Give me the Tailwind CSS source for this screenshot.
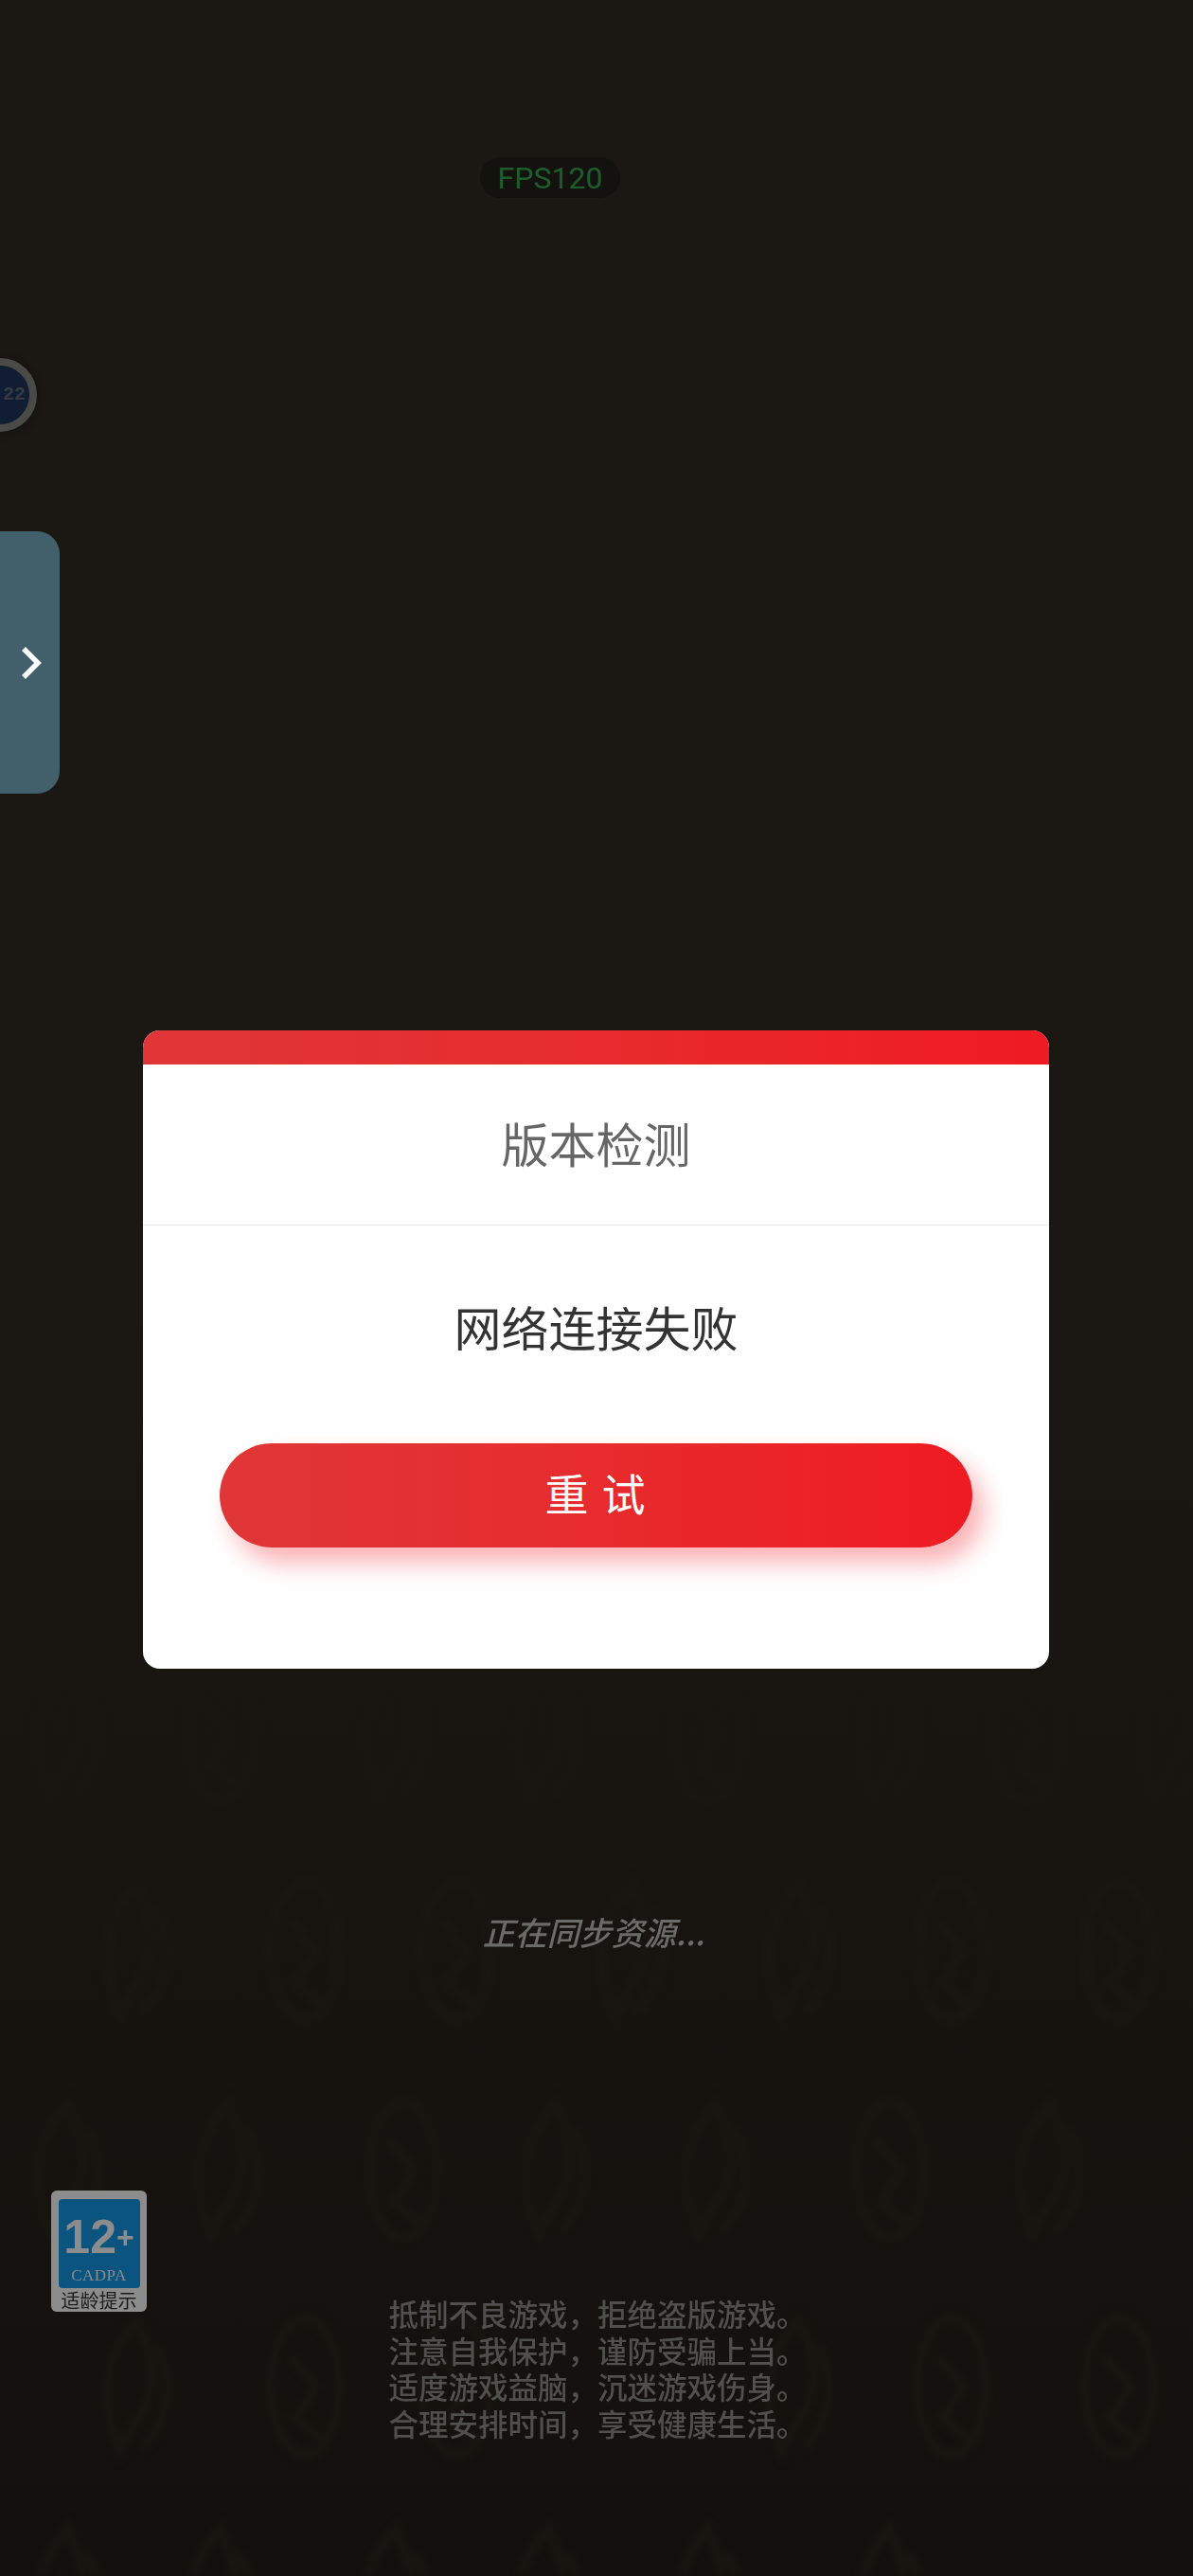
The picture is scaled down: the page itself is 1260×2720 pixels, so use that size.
<!DOCTYPE html>
<html lang="zh-CN">
<head>
    <meta charset="UTF-8">
    <meta name="viewport" content="width=device-width, initial-scale=1.0">
    <title>版本检测</title>
    <script src="https://cdn.jsdelivr.net/npm/@tailwindcss/browser@4"></script>
</head>
<body class="bg-black">
    <div class="relative w-[1260px] h-[2720px] overflow-hidden bg-gradient-to-b from-[#1b1814] via-[#1b1713] to-[#13110d] font-['Noto_Sans_CJK_SC','Noto_Sans',sans-serif]">

        <!-- faint background watermark -->
        <svg class="absolute inset-0 blur-[3px] opacity-70" width="1260" height="2720" viewBox="0 0 1260 2720" fill="none" stroke="#1a1712" stroke-width="11" stroke-linecap="round">
            <defs>
                <g id="flame">
                    <path d="M0 -70C-34 -34 -42 10 -18 68C-8 40 10 30 14 0C18 -24 8 -50 0 -70Z"/>
                    <path d="M22 -40C38 -8 36 30 8 62"/>
                </g>
                <g id="ring">
                    <ellipse cx="0" cy="0" rx="36" ry="72"/>
                    <path d="M-14 -30L12 0L-10 34L14 52"/>
                </g>
            </defs>
            <use href="#flame" x="72" y="1830"/><use href="#ring" x="233" y="1830"/><use href="#flame" x="418" y="1830"/><use href="#flame" x="579" y="1830"/><use href="#ring" x="748" y="1830"/><use href="#flame" x="940" y="1830"/><use href="#ring" x="1085" y="1830"/><use href="#flame" x="1238" y="1830"/>
            <use href="#flame" x="145" y="2060"/><use href="#ring" x="322" y="2060"/><use href="#ring" x="482" y="2060"/><use href="#flame" x="667" y="2060"/><use href="#flame" x="844" y="2060"/><use href="#ring" x="1005" y="2060"/><use href="#ring" x="1182" y="2060"/>
            <use href="#flame" x="72" y="2292"/><use href="#flame" x="241" y="2292"/><use href="#ring" x="426" y="2292"/><use href="#flame" x="587" y="2292"/><use href="#flame" x="756" y="2292"/><use href="#ring" x="940" y="2292"/><use href="#flame" x="1109" y="2292"/>
            <use href="#flame" x="145" y="2520"/><use href="#ring" x="322" y="2520"/><use href="#ring" x="482" y="2520"/><use href="#flame" x="844" y="2520"/><use href="#ring" x="1005" y="2520"/><use href="#ring" x="1182" y="2520"/>
            <use href="#flame" x="72" y="2740"/><use href="#flame" x="233" y="2740"/><use href="#flame" x="418" y="2740"/><use href="#flame" x="579" y="2740"/><use href="#flame" x="748" y="2740"/><use href="#flame" x="940" y="2740"/>
        </svg>

        <!-- floating overlays -->
        <div class="absolute left-[507px] top-[166px] w-[148px] h-[43px] rounded-full bg-[#13120e] flex items-center justify-center text-[32px] leading-none text-[#1f5c2c] font-['Roboto',sans-serif]">FPS120</div>

        <div class="absolute left-[-39px] top-[378px] w-[78px] h-[78px] rounded-full border-[8px] border-[#4a4a47] bg-[#111d33] shadow-[0_0_10px_rgba(0,0,0,0.35)] flex items-center justify-end pr-[4px] text-[20px] leading-none font-bold text-[#363a42] font-['Liberation_Mono',monospace]">22</div>

        <div class="absolute left-0 top-[561px] w-[63px] h-[277px] rounded-r-[24px] bg-[#42606b] flex items-center justify-end pr-[18px]">
            <svg width="24" height="36" viewBox="0 0 24 36" fill="none" stroke="#ffffff" stroke-width="5.5"><path d="M4 3L19 18L4 33"/></svg>
        </div>

        <div class="absolute left-[54px] top-[2313px] w-[101px] h-[128px] rounded-[6px] bg-[#8c8c8c] px-[8px] pt-[9px] flex flex-col items-center blur-[0.4px]">
            <div class="w-[86px] h-[94px] rounded-[4px] bg-[#0c5480] flex flex-col items-center text-[#8c8c8c]">
                <div class="mt-[15px] flex items-center font-['Liberation_Sans',sans-serif] font-bold leading-none">
                    <span class="text-[50px]">12</span><span class="text-[32px]">+</span>
                </div>
                <div class="mt-[7px] text-[17px] leading-none tracking-[0.5px] font-['Liberation_Serif',serif]">CADPA</div>
            </div>
            <div class="text-[20px] leading-[25px] text-[#1c1c1c] whitespace-nowrap">适龄提示</div>
        </div>

        <!-- main column -->
        <div class="relative flex flex-col items-center pt-[1088px] pr-[1px]">
            <div class="w-[957px] h-[674px] rounded-[18px] bg-white overflow-hidden flex flex-col">
                <div class="h-[36px] bg-gradient-to-r from-[#df3637] to-[#ef1a22]"></div>
                <div class="h-[170px] pb-[6px] border-b border-[#eeeeee] flex items-center justify-center text-[50px] leading-none text-[#666666]">版本检测</div>
                <div class="h-[216px] pb-[4px] flex items-center justify-center text-[50px] leading-none text-[#333333]">网络连接失败</div>
                <div class="mx-[81px] h-[110px] mt-[14px] pb-[9px] rounded-full bg-gradient-to-r from-[#df3637] to-[#ef1a22] shadow-[12px_16px_26px_rgba(240,40,50,0.36)] flex items-center justify-center text-[46px] leading-none text-white tracking-[0.04em] whitespace-pre">重 试</div>
            </div>

            <div class="mt-[253px] mr-[5px] h-[50px] flex items-center text-[34px] leading-none italic font-medium text-[#6b6b69] blur-[0.3px]">正在同步资源...</div>

            <div class="mt-[358px] pl-[3px] text-[31.5px] leading-[38.5px] font-medium text-[#4f4f4d] whitespace-nowrap blur-[0.4px]">
                <p>抵制不良游戏，拒绝盗版游戏。</p>
                <p>注意自我保护，谨防受骗上当。</p>
                <p>适度游戏益脑，沉迷游戏伤身。</p>
                <p>合理安排时间，享受健康生活。</p>
            </div>
        </div>
    </div>
</body>
</html>
